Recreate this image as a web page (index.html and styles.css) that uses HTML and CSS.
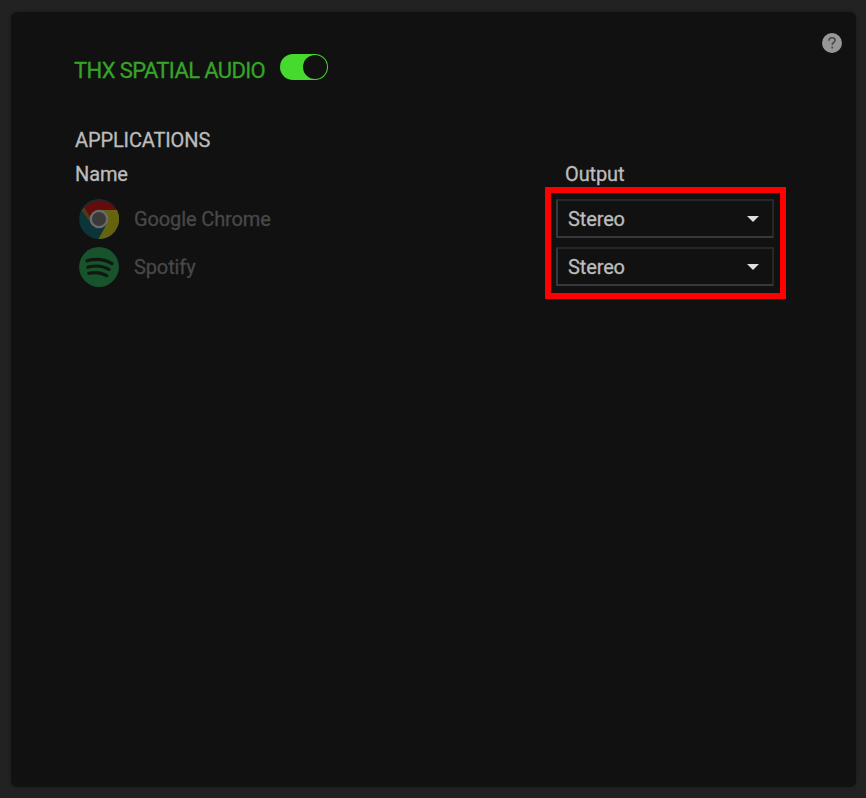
FILE: index.html
```html
<!DOCTYPE html>
<html lang="en">
<head>
<meta charset="utf-8">
<title>THX Spatial Audio</title>
<link rel="stylesheet" href="styles.css">
</head>
<body>
<main class="panel">
  <div class="help">
    <svg width="20" height="20" viewBox="0 0 20 20"><circle cx="10" cy="10" r="10" fill="#979797"/><path d="M6.900 7.700C7 5.700 8.300 4.700 10 4.700c1.800 0 3.100 1 3.100 2.600 0 2-2.900 2.300-2.900 4.700M10.200 13.600v2" fill="none" stroke="#484848" stroke-width="1.600"/></svg>
  </div>
  <header class="title-row">
    <h1 class="title">THX SPATIAL AUDIO</h1>
    <div class="toggle"><span class="knob"></span></div>
  </header>
  <h2 class="section">APPLICATIONS</h2>
  <div class="row head">
    <span class="name-head">Name</span>
    <span class="output-head">Output</span>
  </div>
  <div class="list">
    <div class="row">
      <svg class="icon" width="40" height="40" viewBox="0 0 40 40">
        <circle cx="20" cy="20" r="19.900" fill="#0b3538"/>
        <path d="M5.300 8.500A20 20 0 0 1 38 11H20L12.500 24.500Z" fill="#620c0d"/>
        <path d="M20 11H38A20 20 0 0 1 19.500 40L28 24.500Z" fill="#66630e"/>
        <path d="M2.500 11.500L5.300 8.500L13.500 22L11.500 23.500Z" fill="#4f3b1c"/>
        <circle cx="20" cy="20" r="9.300" fill="#6b6b6b"/>
        <circle cx="20" cy="20" r="7" fill="#393939"/>
      </svg>
      <span class="app">Google Chrome</span>
      <div class="select"><span>Stereo</span><i class="caret"></i></div>
    </div>
    <div class="row">
      <svg class="icon" width="40" height="40" viewBox="0 0 40 40">
        <circle cx="20" cy="20" r="19.900" fill="#17542b"/>
        <path d="M8 13.800Q21.500 10 33 16.600M8.800 20.200Q20.500 17 30 22.400M9.800 26.300Q20 24 27.700 28.700" fill="none" stroke="#0f1811" stroke-width="3.200" stroke-linecap="round"/>
      </svg>
      <span class="app">Spotify</span>
      <div class="select"><span>Stereo</span><i class="caret"></i></div>
    </div>
    <div class="highlight"></div>
  </div>
</main>
</body>
</html>
```
FILE: styles.css
```css
* { box-sizing: border-box; }
body {
  margin: 0;
  height: 798px;
  padding: 12px 10px 11px 11px;
  background: #222;
  font: 20px/24px Roboto, sans-serif;
  letter-spacing: -0.12px;
  -webkit-text-stroke: 0.3px;
  color: #bcbcbc;
  overflow: hidden;
}
.panel {
  position: relative;
  height: 775px;
  padding: 41px 81px 0 64px;
  border-radius: 6px;
  background: #111;
  box-shadow: 0 0 3px #191919;
}
.help {
  position: absolute;
  top: 21px;
  right: 14px;
  height: 20px;
}
.help svg { display: block; }
.title-row {
  display: flex;
  align-items: flex-start;
  height: 62px;
}
.title {
  width: 206px;
  margin: 5px 0 0 -1px;
  font-size: 22px;
  font-weight: 400;
  line-height: 26px;
  letter-spacing: -0.62px;
  white-space: nowrap;
  color: #36a428;
}
.toggle {
  display: flex;
  justify-content: flex-end;
  width: 48px;
  height: 26px;
  margin-top: 1px;
  border-radius: 13px;
  background: #45da2d;
}
.knob {
  width: 24px;
  height: 24px;
  margin: 1px;
  border-radius: 50%;
  background: #111;
}
.section {
  margin: 13px 0 10px;
  font-size: 20px;
  font-weight: 400;
  line-height: 24px;
}
.row {
  display: flex;
  align-items: center;
  height: 48px;
}
.head { height: 24px; }
.name-head { width: 490px; }
.list { position: relative; margin-top: 9px; }
.icon { margin: 0 15px 0 4px; }
.app { width: 422px; color: #484848; }
.select {
  display: flex;
  justify-content: space-between;
  align-items: center;
  width: 218px;
  height: 39px;
  margin-bottom: 1px;
  padding: 1px 13px 0 10px;
  border: 2px solid #383838;
  border-top-color: #272727;
  border-right-color: #272727;
}
.caret {
  border: 6px solid transparent;
  border-top: 6px solid #dedede;
  border-bottom: 0;
}
.highlight {
  position: absolute;
  left: 470px;
  top: -8px;
  width: 241px;
  height: 112px;
  border: 6px solid #f00;
}
```
